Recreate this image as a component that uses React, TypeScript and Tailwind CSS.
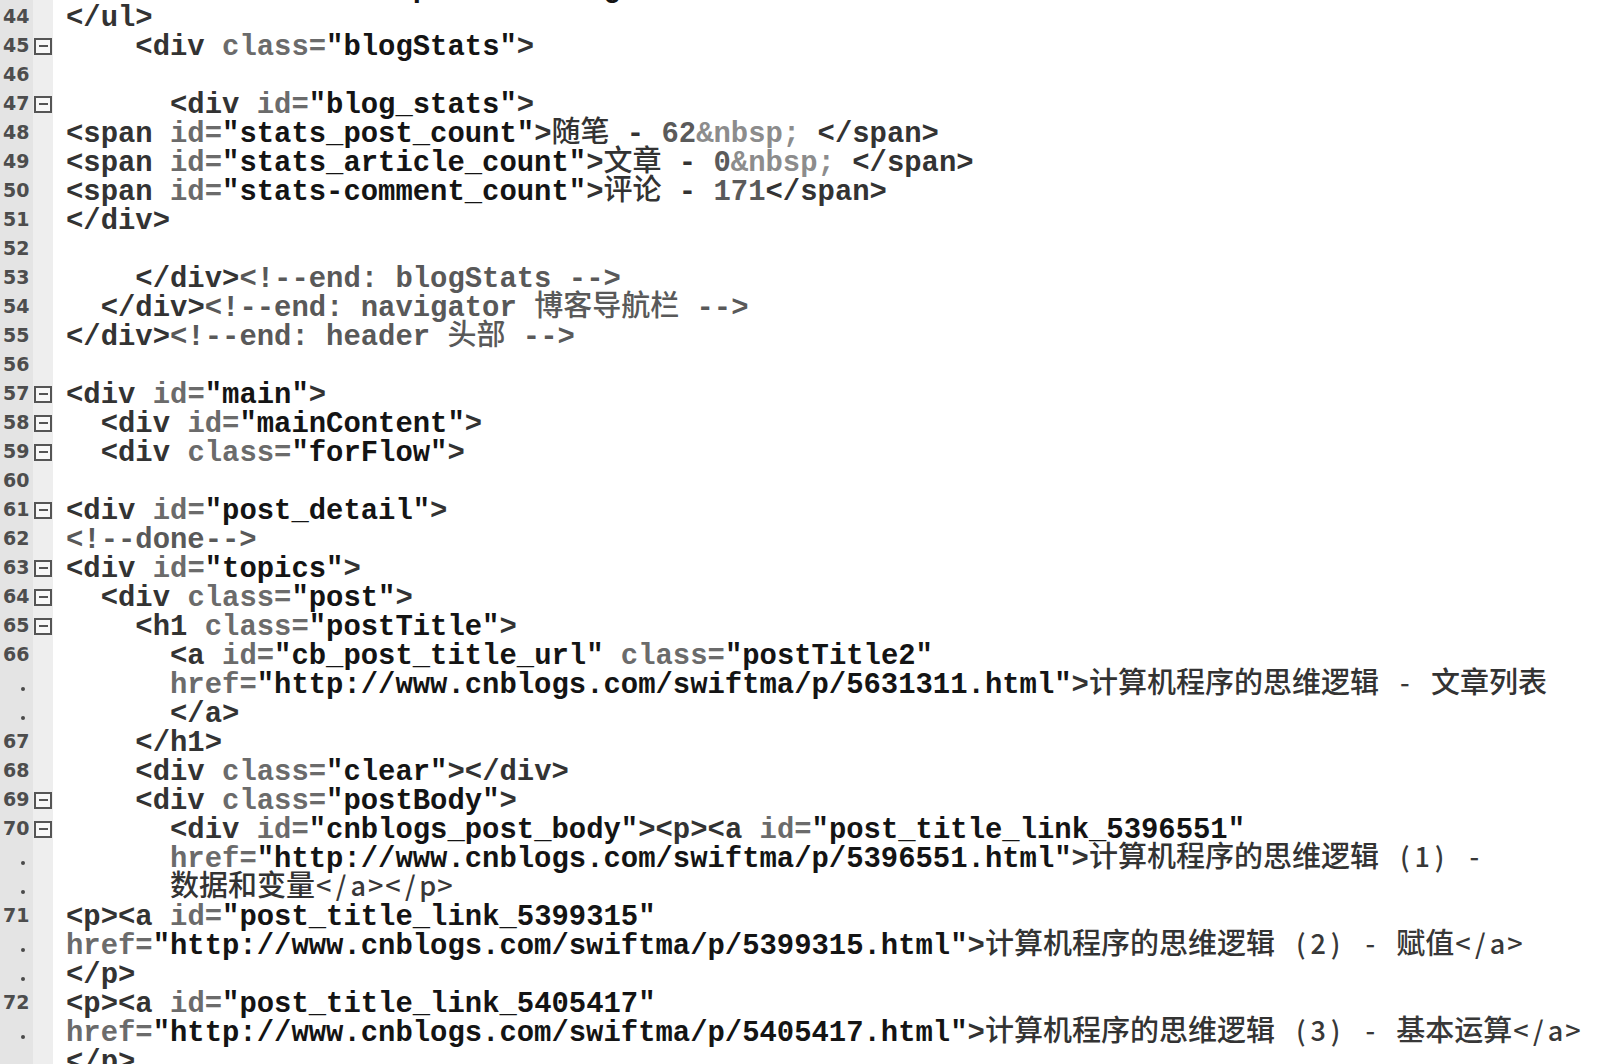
import React from 'react';

type Kind = 'tag' | 'attr' | 'val' | 'com' | 'ent' | 'num' | 'txt';
type Tok = { k: Kind; t: string };

const COLOR: Record<Kind, string> = {
    tag: 'text-[#333333]',
    attr: 'text-[#6b6b6b]',
    val: 'text-[#141414]',
    com: 'text-[#595959]',
    ent: 'text-[#8c8c8c]',
    num: 'text-[#5a5a5a]',
    txt: 'text-[#333333]',
};

const RULES: [Kind, RegExp][] = [
    ['com', /<!--.*?(?:-->|$)/y],
    ['tag', /<\/?[A-Za-z0-9]+/y],
    ['attr', /[A-Za-z_-]+=/y],
    ['val', /"[^"]*"?/y],
    ['tag', /\/?>/y],
    ['ent', /&[a-z]+;/y],
    ['num', /\d+/y],
];

function tokenize(src: string): Tok[] {
    const out: Tok[] = [];
    let i = 0;
    while (i < src.length) {
        let hit = false;
        for (const [k, re] of RULES) {
            re.lastIndex = i;
            const m = re.exec(src);
            if (m && m[0].length) {
                out.push({ k, t: m[0] });
                i += m[0].length;
                hit = true;
                break;
            }
        }
        if (!hit) {
            const last = out[out.length - 1];
            if (last && last.k === 'txt') last.t += src[i];
            else out.push({ k: 'txt', t: src[i] });
            i++;
        }
    }
    return out;
}

const CJK = /([\u3000-\u9fff]+)/;

// leading-[0] keeps the CJK face from growing the line box
function Han({ children }: { children: React.ReactNode }) {
    return (
        <span className="font-['Noto_Sans_CJK_SC',sans-serif] font-medium text-[29px] leading-[0]">
            {children}
        </span>
    );
}

function Run({ text, cls }: { text: string; cls: string }) {
    return (
        <span className={cls}>
            {text.split(CJK).map((part, i) => (CJK.test(part) ? <Han key={i}>{part}</Han> : part))}
        </span>
    );
}

// ascii that the editor drew with its fallback face, still one cell per char
function SansRun({ text }: { text: string }) {
    return (
        <span className="text-[#383838]">
            {Array.from(text).map((ch, i) =>
                CJK.test(ch) ? (
                    <Han key={i}>{ch}</Han>
                ) : (
                    <span
                        key={i}
                        className="inline-block w-[17.34px] text-center font-['Noto_Sans_CJK_SC',sans-serif] font-medium text-[27px] leading-[0]"
                    >
                        {ch}
                    </span>
                )
            )}
        </span>
    );
}

function Code({ src }: { src: string }) {
    // segments between § markers are in the fallback face
    const parts = src.split('§');
    return (
        <>
            {parts.map((p, i) =>
                i % 2 === 1 ? (
                    <SansRun key={i} text={p} />
                ) : (
                    tokenize(p).map((tk, j) => <Run key={`${i}-${j}`} text={tk.t} cls={COLOR[tk.k]} />)
                )
            )}
        </>
    );
}

type Row = [number | '.' | '', number, string];

const FOLD = new Set([45, 47, 57, 58, 59, 61, 63, 64, 65, 69, 70]);

const ROWS: Row[] = [
    ['', 4, '<li><a href="http://i.cnblogs.com/">管理</a></li>'],
    [44, 0, '</ul>'],
    [45, 4, '<div class="blogStats">'],
    [46, 0, ''],
    [47, 6, '<div id="blog_stats">'],
    [48, 0, '<span id="stats_post_count">随笔 - 62&nbsp; </span>'],
    [49, 0, '<span id="stats_article_count">文章 - 0&nbsp; </span>'],
    [50, 0, '<span id="stats-comment_count">评论 - 171</span>'],
    [51, 0, '</div>'],
    [52, 0, ''],
    [53, 4, '</div><!--end: blogStats -->'],
    [54, 2, '</div><!--end: navigator 博客导航栏 -->'],
    [55, 0, '</div><!--end: header 头部 -->'],
    [56, 0, ''],
    [57, 0, '<div id="main">'],
    [58, 2, '<div id="mainContent">'],
    [59, 2, '<div class="forFlow">'],
    [60, 0, ''],
    [61, 0, '<div id="post_detail">'],
    [62, 0, '<!--done-->'],
    [63, 0, '<div id="topics">'],
    [64, 2, '<div class="post">'],
    [65, 4, '<h1 class="postTitle">'],
    [66, 6, '<a id="cb_post_title_url" class="postTitle2"'],
    ['.', 6, 'href="http://www.cnblogs.com/swiftma/p/5631311.html">计算机程序的思维逻辑§ - §文章列表'],
    ['.', 6, '</a>'],
    [67, 4, '</h1>'],
    [68, 4, '<div class="clear"></div>'],
    [69, 4, '<div class="postBody">'],
    [70, 6, '<div id="cnblogs_post_body"><p><a id="post_title_link_5396551"'],
    ['.', 6, 'href="http://www.cnblogs.com/swiftma/p/5396551.html">计算机程序的思维逻辑§ (1) -§'],
    ['.', 6, '数据和变量§</a></p>§'],
    [71, 0, '<p><a id="post_title_link_5399315"'],
    ['.', 0, 'href="http://www.cnblogs.com/swiftma/p/5399315.html">计算机程序的思维逻辑§ (2) - 赋值</a>§'],
    ['.', 0, '</p>'],
    [72, 0, '<p><a id="post_title_link_5405417"'],
    ['.', 0, 'href="http://www.cnblogs.com/swiftma/p/5405417.html">计算机程序的思维逻辑§ (3) - 基本运算</a>§'],
    ['.', 0, '</p>'],
];

function Line({ row }: { row: Row }) {
    const [n, indent, src] = row;
    return (
        <div className="flex h-[29px]">
            <div className="w-[33px] shrink-0 bg-[#e4e4e4] pl-[3px]">
                {n === '.' ? (
                    <div className="mt-[16px] ml-[18px] w-[4px] h-[4px] rounded-full bg-[#4a4a4a]" />
                ) : (
                    <span className="font-['DejaVu_Sans',sans-serif] font-bold text-[19px] leading-[24px] text-[#4d4d4d]">
                        {n}
                    </span>
                )}
            </div>
            <div className="w-[20px] shrink-0 bg-[#eeeeee] flex items-center">
                {typeof n === 'number' && FOLD.has(n) && (
                    <div className="ml-[1px] -mt-[3px] w-[18px] h-[17px] border-2 border-[#555555] bg-[#f8f8f8] flex items-center justify-center">
                        <div className="w-[9px] h-[2px] bg-[#555555]" />
                    </div>
                )}
            </div>
            <div className="pl-[13px] whitespace-pre leading-[29px] text-[28.9px] font-bold font-['Liberation_Mono',monospace]">
                {' '.repeat(indent)}
                <Code src={src} />
            </div>
        </div>
    );
}

export default function App() {
    return (
        <div className="h-screen w-full overflow-hidden bg-white">
            <div className="-mt-[25px]">
                {ROWS.map((r, i) => (
                    <Line key={i} row={r} />
                ))}
            </div>
        </div>
    );
}
